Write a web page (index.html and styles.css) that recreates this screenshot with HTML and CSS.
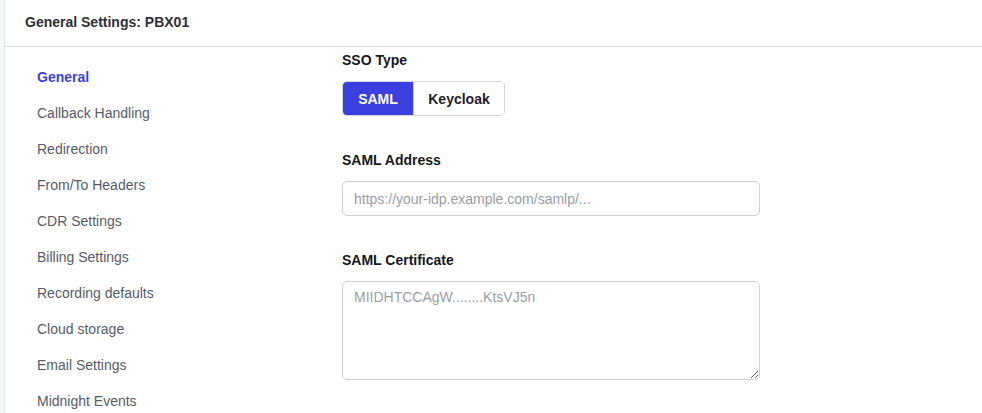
FILE: index.html
```html
<!DOCTYPE html>
<html lang="en">
<head>
<meta charset="utf-8">
<title>General Settings: PBX01</title>
<link rel="stylesheet" href="styles.css">
</head>
<body>
<div class="panel">
  <header class="header">General Settings: PBX01</header>
  <div class="body">
    <nav class="sidebar">
      <a class="nav-item active" href="#">General</a>
      <a class="nav-item" href="#">Callback Handling</a>
      <a class="nav-item" href="#">Redirection</a>
      <a class="nav-item" href="#">From/To Headers</a>
      <a class="nav-item" href="#">CDR Settings</a>
      <a class="nav-item" href="#">Billing Settings</a>
      <a class="nav-item" href="#">Recording defaults</a>
      <a class="nav-item" href="#">Cloud storage</a>
      <a class="nav-item" href="#">Email Settings</a>
      <a class="nav-item" href="#">Midnight Events</a>
    </nav>
    <main class="content">
      <div class="field">
        <div class="label">SSO Type</div>
        <div class="btn-group">
          <button class="btn btn-active" type="button">SAML</button>
          <button class="btn" type="button">Keycloak</button>
        </div>
      </div>
      <div class="field">
        <div class="label">SAML Address</div>
        <input class="input" type="text" placeholder="https://your-idp.example.com/samlp/...">
      </div>
      <div class="field">
        <div class="label">SAML Certificate</div>
        <textarea class="textarea" placeholder="MIIDHTCCAgW........KtsVJ5n"></textarea>
      </div>
    </main>
  </div>
</div>
</body>
</html>
```

FILE: styles.css
```css
* { box-sizing: border-box; }
html, body { margin: 0; height: 100%; }
body {
  background: #f6f7fb;
  font-family: "Liberation Sans", Arial, Helvetica, sans-serif;
  color: #1f2128;
  overflow: hidden;
}
.panel {
  margin-left: 4px;
  border-left: 1px solid #e3e4e8;
  background: #ffffff;
  min-height: 100%;
}
.header {
  height: 47px;
  border-bottom: 1px solid #e2e3e6;
  padding: 0 0 3px 20px;
  display: flex;
  align-items: center;
  font-size: 14px;
  font-weight: 700;
  color: #2c2f36;
}
.body {
  display: flex;
}
.sidebar {
  width: 337px;
  flex: none;
  display: flex;
  flex-direction: column;
  padding: 12px 0 0 32px;
}
.nav-item {
  display: block;
  height: 36px;
  line-height: 36px;
  font-size: 14px;
  color: #575b67;
  text-decoration: none;
}
.nav-item.active {
  color: #3c3fe0;
  font-weight: 700;
}
.content {
  flex: 1;
  padding-top: 5px;
}
.field { margin-bottom: 36px; }
.label {
  font-size: 14px;
  font-weight: 700;
  line-height: 17px;
  color: #17181d;
  margin-bottom: 12px;
}
.btn-group {
  display: inline-flex;
  border: 1px solid #d3d5da;
  border-radius: 5px;
  overflow: hidden;
  height: 35px;
}
.btn {
  font-family: inherit;
  font-size: 14px;
  font-weight: 700;
  border: 0;
  background: #ffffff;
  color: #1f2128;
  padding: 0;
  height: 100%;
}
.btn:first-child { width: 70px; }
.btn:last-child { width: 91px; border-left: 1px solid #d3d5da; }
.btn-active {
  background: #3c3fe0;
  color: #ffffff;
}
.input, .textarea {
  display: block;
  width: 418px;
  border: 1px solid #cfd1d6;
  border-radius: 5px;
  font-family: inherit;
  font-size: 14px;
  color: #1f2128;
  padding: 0 11px;
  background: #fff;
}
.input { height: 35px; }
.textarea {
  height: 99px;
  padding-top: 7px;
  resize: vertical;
}
.input::placeholder, .textarea::placeholder { color: #9b9da6; }
```
